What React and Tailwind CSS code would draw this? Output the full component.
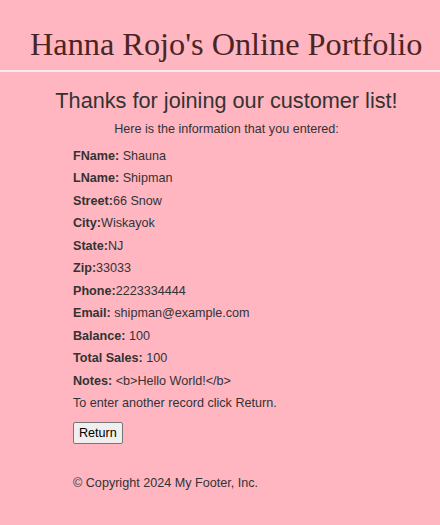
export default function App() {
  const rows = [
    ["FName: ", "Shauna"],
    ["LName: ", "Shipman"],
    ["Street:", "66 Snow"],
    ["City:", "Wiskayok"],
    ["State:", "NJ"],
    ["Zip:", "33033"],
    ["Phone:", "2223334444"],
    ["Email: ", "shipman@example.com"],
    ["Balance: ", "100"],
    ["Total Sales: ", "100"],
    ["Notes: ", "<b>Hello World!</b>"],
  ];

  return (
    <div className="min-h-[525px] bg-[#ffb6c1] text-[#333333] font-['Liberation_Sans',Arial,sans-serif]">
      <header className="border-b-2 border-[#eeeeee] pt-[26px] pb-[8px] pl-[30px]">
        <h1 className="font-['Liberation_Serif','Times_New_Roman',serif] text-[32.3px] leading-[36px] text-[#4a2525]">
          Hanna Rojo's Online Portfolio
        </h1>
      </header>

      <main className="pt-[15px] pl-[13px]">
        <h2 className="text-center text-[21.7px] leading-[28px]">
          Thanks for joining our customer list!
        </h2>
        <p className="text-center text-[12.6px] leading-[20px] mt-[4px]">
          Here is the information that you entered:
        </p>

        <div className="pl-[60px] text-[12.6px] mt-[6px]">
          {rows.map(([label, value]) => (
            <div key={label} className="leading-[22.45px]">
              <b>{label}</b>
              {value}
            </div>
          ))}
          <div className="leading-[22.45px]">To enter another record click Return.</div>
          <button className="mt-[8px] px-[5px] h-[22px] text-[12.6px] bg-[#efefef] border border-[#767676] rounded-[2px] text-black">
            Return
          </button>
          <p className="mt-[30px] text-[12.6px]">© Copyright 2024 My Footer, Inc.</p>
        </div>
      </main>
    </div>
  );
}
